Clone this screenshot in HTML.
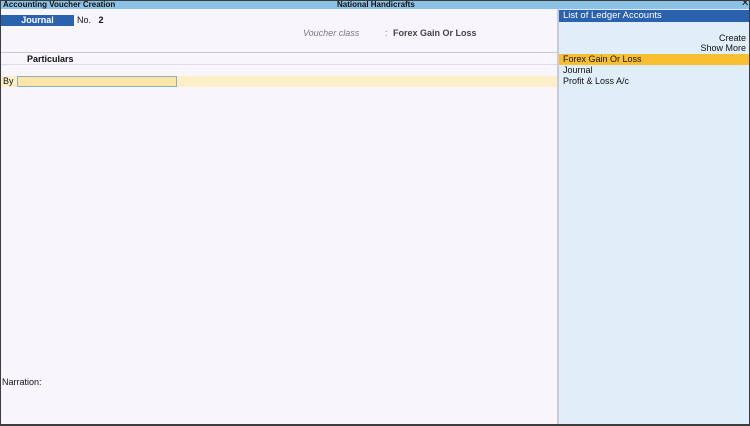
<!DOCTYPE html>
<html><head><style>
*{margin:0;padding:0;box-sizing:border-box}
body{width:750px;height:426px;overflow:hidden;font-family:"Liberation Sans",sans-serif;font-size:9px;color:#111;background:#3c3c3c}
#w{position:absolute;left:1px;top:1px;width:748px;height:423px;background:#f8f6fc;overflow:hidden}
.a{position:absolute;white-space:nowrap}
</style></head><body><div id="w">
<div class="a" style="left:0;top:0;width:748px;height:8px;background:#8cc2e6"></div>
<div class="a" style="left:2px;top:-1px;font-size:8px;font-weight:bold;line-height:9px">Accounting Voucher Creation</div>
<div class="a" style="left:336px;top:-1px;font-size:8px;font-weight:bold;line-height:9px">National Handicrafts</div>
<div class="a" style="left:740px;top:-2px;font-size:10px;line-height:10px">✕</div>
<div class="a" style="left:0;top:14px;width:73px;height:11px;background:#2a62ae;color:#fff;font-weight:bold;text-align:center;line-height:11px">Journal</div>
<div class="a" style="left:76px;top:14px;line-height:11px">No.&nbsp;&nbsp;&nbsp;<b>2</b></div>
<div class="a" style="left:302px;top:27px;color:#777;font-style:italic;line-height:11px">Voucher class</div>
<div class="a" style="left:384px;top:27px;color:#777;line-height:11px">:</div>
<div class="a" style="left:392px;top:27px;color:#444;font-weight:bold;line-height:11px">Forex Gain Or Loss</div>
<div class="a" style="left:0;top:51px;width:557px;height:1px;background:#c8c8d0"></div>
<div class="a" style="left:26px;top:53px;font-weight:bold;line-height:10px">Particulars</div>
<div class="a" style="left:0;top:63px;width:557px;height:1px;background:#dcdce4"></div>
<div class="a" style="left:0;top:75px;width:557px;height:11px;background:#fdefc8"></div>
<div class="a" style="left:2px;top:75px;line-height:11px">By</div>
<div class="a" style="left:16px;top:75px;width:160px;height:11px;background:#fde6a8;border:1px solid #8ab0b8"></div>
<div class="a" style="left:1px;top:376px;line-height:10px">Narration:</div>
<div class="a" style="left:556px;top:8px;width:2px;height:416px;background:#c8cad8"></div>
<div class="a" style="left:558px;top:8px;width:190px;height:416px;background:#e0eef9"></div>
<div class="a" style="left:558px;top:9px;width:190px;height:12px;background:#2a62ae;color:#fff;font-size:9.5px;line-height:12px;padding-left:4px">List of Ledger Accounts</div>
<div class="a" style="right:3px;top:32px;line-height:10px;text-align:right">Create<br>Show More</div>
<div class="a" style="left:558px;top:53px;width:190px;height:11px;background:#f8c030;line-height:11px;padding-left:4px">Forex Gain Or Loss</div>
<div class="a" style="left:562px;top:64px;line-height:11px">Journal<br>Profit &amp; Loss A/c</div>
</div></body></html>
